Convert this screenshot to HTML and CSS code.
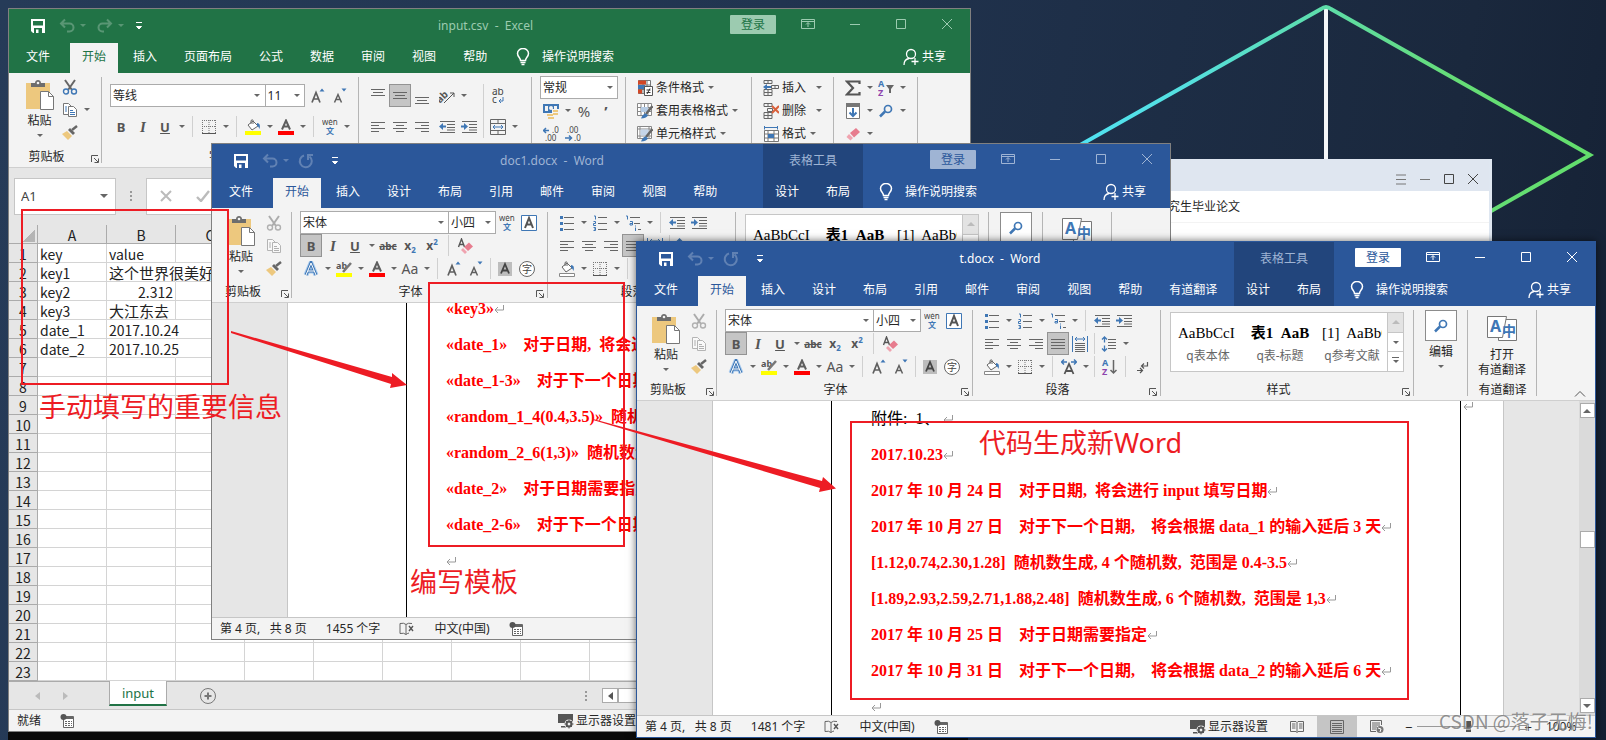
FILE: index.html
```html
<!DOCTYPE html>
<html lang="zh-CN">
<head>
    <meta charset="UTF-8">
    <meta name="viewport" content="width=device-width, initial-scale=1.0">
    <title>t.docx - Word</title>
    <link rel="stylesheet" href="styles.css">
</head>
<body>
    <!-- icon sprite -->
    <svg class="sprite" aria-hidden="true">
        <symbol id="save" viewBox="0 0 16 16"><path d="M1 1h14v14H3l-2-2z" fill="currentColor"/><path d="M3 3h10v4.500H3zM4 10h8v5H4z" fill="var(--bar)"/><path d="M6 11.500h2.500V15H6z" fill="currentColor"/></symbol>
        <symbol id="undo" viewBox="0 0 16 16"><path d="M2 5.500h8.500a4 4 0 0 1 0 8H8M6 1.500l-4 4 4 4" fill="none" stroke="currentColor" stroke-width="2"/></symbol>
        <symbol id="redo" viewBox="0 0 16 16"><path d="M14 5.500H5.500a4 4 0 0 0 0 8H7M10 1.500l4 4-4 4" fill="none" stroke="currentColor" stroke-width="2"/></symbol>
        <symbol id="repeat" viewBox="0 0 16 16"><path d="M6 2.500a6 6 0 1 0 5.500 1" fill="none" stroke="currentColor" stroke-width="2"/><path d="M10 7V2h5" fill="none" stroke="currentColor" stroke-width="2"/></symbol>
        <symbol id="custom" viewBox="0 0 8 10"><path d="M1 1.500h6M1.500 5.500h5L4 8z" stroke="currentColor" fill="currentColor"/></symbol>
        <symbol id="ropt" viewBox="0 0 14 12"><path d="M.5 1.500h13v9H.5zM.5 3.500h13M7 9V5M5 6.500l2-2 2 2" fill="none" stroke="currentColor"/></symbol>
        <symbol id="min" viewBox="0 0 12 12"><path d="M1 6.500h10" stroke="currentColor"/></symbol>
        <symbol id="max" viewBox="0 0 12 12"><path d="M1.500 1.500h9v9h-9z" fill="none" stroke="currentColor"/></symbol>
        <symbol id="close" viewBox="0 0 12 12"><path d="M1 1l10 10M11 1L1 11" stroke="currentColor"/></symbol>
        <symbol id="menu" viewBox="0 0 12 12"><path d="M1 2h10M1 6.500h10M1 11h10" stroke="currentColor"/></symbol>
        <symbol id="bulb" viewBox="0 0 14 18"><path d="M4.500 12.500c0-3-3-3.500-3-7a5.500 5 0 0 1 11 0c0 3.500-3 4-3 7zM4.500 14.500h5M5.500 16.500h3" fill="none" stroke="currentColor" stroke-width="1.500"/></symbol>
        <symbol id="person" viewBox="0 0 16 18"><circle cx="8" cy="6" r="4.500" fill="none" stroke="currentColor" stroke-width="1.300"/><path d="M1 17c0-4 2-6 5-6.500M12 10v7M8.500 13.500h7" fill="none" stroke="currentColor" stroke-width="1.300"/></symbol>
        <symbol id="paste" viewBox="0 0 28 30"><path d="M0 3h24v26H0z" fill="#edc87e"/><path d="M5 7V3h4c0-4 6-4 6 0h4v4z" fill="#6d6d6d"/><circle cx="12" cy="3" r="1.300" fill="#f3f3f3"/><path d="M14.500 11.500h8l5 5v13h-13z" fill="#fff" stroke="#777"/><path d="M22.500 11.500v5h5" fill="none" stroke="#777"/></symbol>
        <symbol id="cut" viewBox="0 0 16 16"><path d="M3 1l7 10M13 1L6 11" stroke="#666" stroke-width="2" fill="none"/><circle cx="4" cy="12.500" r="2.500" fill="none" stroke="#3f77b5" stroke-width="1.400"/><circle cx="12" cy="12.500" r="2.500" fill="none" stroke="#3f77b5" stroke-width="1.400"/></symbol>
        <symbol id="copy" viewBox="0 0 16 16"><path d="M1.500 1.500h5l3 3v8h-8z" fill="#fff" stroke="#777"/><path d="M6.500 4.500h5l3 3v7h-8z" fill="#fff" stroke="#777"/><path d="M3 5h2M3 7h2M3 9h2M8 8.500h3M8 10.500h5M8 12.500h5" stroke="#3f77b5"/></symbol>
        <symbol id="brush" viewBox="0 0 16 16"><path d="M0 9l5-3 5 5-4 4z" fill="#edc87e"/><path d="M6 5l2-2 5 5-2 2z" fill="#666"/><path d="M10 5l5-4" stroke="#666" stroke-width="2.500"/></symbol>
        <symbol id="fontup" viewBox="0 0 16 16"><path d="M2 14.500l4-10 4 10M3.500 11h5" fill="none" stroke="#5f5f5f" stroke-width="1.700"/><path d="M9.500 3.500h5L12 .5z" fill="#3f77b5"/></symbol>
        <symbol id="fontdown" viewBox="0 0 16 16"><path d="M2.500 14.500l3.500-8 3.500 8M4 11.500h4" fill="none" stroke="#5f5f5f" stroke-width="1.500"/><path d="M9.500.5h5L12 3.500z" fill="#3f77b5"/></symbol>
        <symbol id="borders" viewBox="0 0 16 16"><path d="M1.500 1v13M8 1v13M14.500 1v13M1 1.500h14M1 7.500h14" stroke="#777" stroke-dasharray="1 1"/><path d="M1 14.500h14" stroke="#555"/></symbol>
        <symbol id="fill" viewBox="0 0 16 16"><path d="M3 6l5-4 5 5-6 4z" fill="#fff" stroke="#666"/><path d="M6 5V1.500q2-1.500 2 0V5" fill="none" stroke="#666"/><path d="M12 4q4 0 2.500 6-1-3-2.500-3z" fill="#3f77b5"/><path d="M0 12h16v4H0z" fill="#ff0"/></symbol>
        <symbol id="shading" viewBox="0 0 16 16"><path d="M3 6l5-4 5 5-6 4z" fill="#fff" stroke="#666"/><path d="M6 5V1.500q2-1.500 2 0V5" fill="none" stroke="#666"/><path d="M12 4q4 0 2.500 6-1-3-2.500-3z" fill="#3f77b5"/><path d="M.5 12.500h15v3H.5z" fill="#fff" stroke="#888"/></symbol>
        <symbol id="fontcolor" viewBox="0 0 16 16"><path d="M4 10.500l4-9 4 9M5.500 7.500h5" fill="none" stroke="#5f5f5f" stroke-width="2"/><path d="M0 12h16v4H0z" fill="#f00"/></symbol>
        <symbol id="wen" viewBox="0 0 16 16"><text x="0" y="6" font-size="8" fill="#444">wén</text><text x="4" y="15" font-size="8" font-weight="bold" fill="#3f77b5">文</text></symbol>
        <symbol id="atop" viewBox="0 0 16 16"><path d="M1 1.500h14M3 4.500h10M1 7.500h14" stroke="#666"/></symbol>
        <symbol id="amid" viewBox="0 0 16 16"><path d="M1 4.500h14M3 7.500h10M1 10.500h14" stroke="#666"/></symbol>
        <symbol id="abot" viewBox="0 0 16 16"><path d="M1 9.500h14M3 12.500h10M1 15.500h14" stroke="#666"/></symbol>
        <symbol id="left" viewBox="0 0 16 16"><path d="M1 3.500h14M1 6.500h8M1 9.500h14M1 12.500h8" stroke="#666"/></symbol>
        <symbol id="center" viewBox="0 0 16 16"><path d="M1 3.500h14M4 6.500h8M1 9.500h14M4 12.500h8" stroke="#666"/></symbol>
        <symbol id="right" viewBox="0 0 16 16"><path d="M1 3.500h14M7 6.500h8M1 9.500h14M7 12.500h8" stroke="#666"/></symbol>
        <symbol id="justify" viewBox="0 0 16 16"><path d="M1 3.500h14M1 6.500h14M1 9.500h14M1 12.500h14" stroke="#666"/></symbol>
        <symbol id="distribute" viewBox="0 0 16 16"><path d="M.5 0v16M15.500 0v16M3 3h10M5 1L3 3l2 2M11 1l2 2-2 2" fill="none" stroke="#3f77b5"/><path d="M3 7.500h10M3 9.500h10M3 11.500h10M3 13.500h10M3 15.500h10" stroke="#666"/></symbol>
        <symbol id="orient" viewBox="0 0 16 16"><text x="-3" y="10" font-size="10" fill="#555" font-weight="bold" transform="rotate(-45 6 8)">ab</text><path d="M5 15L15 5M11 5h4v4" stroke="#555" fill="none"/></symbol>
        <symbol id="outdent" viewBox="0 0 16 16"><path d="M1 2.500h15M8 5.500h8M8 8.500h8M1 13.500h15M8 11h8" stroke="#666"/><path d="M0 7.500l4-3.500v2.500h3v2H4V11z" fill="#3f77b5"/></symbol>
        <symbol id="indent" viewBox="0 0 16 16"><path d="M1 2.500h15M8 5.500h8M8 8.500h8M1 13.500h15M8 11h8" stroke="#666"/><path d="M7 7.500L3 4v2.500H0v2h3V11z" fill="#3f77b5"/></symbol>
        <symbol id="wrap" viewBox="0 0 16 16"><text x="2" y="7" font-size="10" fill="#444">ab</text><text x="2" y="15" font-size="10" fill="#444">c</text><path d="M13 9v4H9M11 11l-2 2 2 2" fill="none" stroke="#3f77b5"/></symbol>
        <symbol id="merge" viewBox="0 0 16 16"><path d="M.5.5h15v15H.5zM.5 4.500h15M.5 11.500h15M8 .5v4M8 11.500v4" fill="none" stroke="#666"/><path d="M3 8h10M5 6L3 8l2 2M11 6l2 2-2 2" fill="none" stroke="#3f77b5"/></symbol>
        <symbol id="money" viewBox="0 0 16 16"><path d="M0 1h16v9H0z" fill="#3f77b5"/><path d="M2 3h3v5H2zM11 3h3v5h-3z" fill="#f3f3f3"/><circle cx="8" cy="5" r="2" fill="#f3f3f3"/><path d="M9 6h7v9H9zM3 10h7v6H3z" fill="#f3f3f3"/><path d="M10 7h5v2h-5zM10 10h5v2h-5zM4 11h6v2H4zM5 14h6v2H5z" fill="#edc87e"/></symbol>
        <symbol id="dec1" viewBox="0 0 16 16"><text x="9" y="7" font-size="8" fill="#444">.0</text><text x="2" y="15" font-size="8" fill="#444">.00</text><path d="M0 4.500h6M3 2L.5 4.500 3 7" fill="none" stroke="#3f77b5" stroke-width="1.500"/></symbol>
        <symbol id="dec2" viewBox="0 0 16 16"><text x="2" y="7" font-size="8" fill="#444">.00</text><text x="9" y="15" font-size="8" fill="#444">.0</text><path d="M0 12h6M4 9.500L6.500 12 4 14.500" fill="none" stroke="#3f77b5" stroke-width="1.500"/></symbol>
        <symbol id="cond" viewBox="0 0 16 16"><path d="M1.500.5h12v13h-12zM1.500 5h12M1.500 9.500h12M6 .5v13M10 .5v13" fill="#fff" stroke="#777"/><path d="M1 .5h8v4H1zM1 9.500h4v4H1z" fill="#d24726"/><path d="M1 5h7v4H1z" fill="#3f77b5"/><path d="M7.500 6.500h8v9h-8z" fill="#fff" stroke="#555"/><path d="M9.500 10h4M9.500 12.500h4M13 8.500l-3 5.500" stroke="#333"/></symbol>
        <symbol id="tabfmt" viewBox="0 0 16 16"><path d="M.5.5h14v12H.5zM.5 4.500h14M.5 8.500h14M4 .5v12M7.500.5v12M11 .5v12" fill="#fff" stroke="#888"/><path d="M4 4h7v5H4z" fill="#b5cbe4"/><path d="M15.500 3L9 11" stroke="#666" stroke-width="2.500"/><path d="M4 15.500q2-5 5-5l2 2q-2 3-7 3z" fill="#3f77b5"/></symbol>
        <symbol id="cellstyle" viewBox="0 0 16 16"><path d="M.5.5h14v12H.5zM.5 3h14M.5 10h14M3 .5v12M12 .5v12" fill="#fff" stroke="#888"/><path d="M3.500 3.500h8v6h-8z" fill="#c5d5e8"/><path d="M15.500 3L9 11" stroke="#666" stroke-width="2.500"/><path d="M4 15.500q2-5 5-5l2 2q-2 3-7 3z" fill="#3f77b5"/></symbol>
        <symbol id="insert" viewBox="0 0 16 16"><path d="M1 .5h8v3H1zM5 .5v3M1 12.500h8v3H1zM1 9.500h8v3M1 12.500v-3M5 9.500v6M8.500 5.500h7v3h-7zM12 5.500v3" fill="none" stroke="#666"/><path d="M0 7l4-3v2h4v2H4v2z" fill="#3f77b5"/></symbol>
        <symbol id="delete" viewBox="0 0 16 16"><path d="M1 .5h8v3H1zM5 .5v3M1 12.500h8v3H1zM1 9.500h8v3M1 12.500v-3M5 9.500v6M4.500 5.500h5v3h-5z" fill="none" stroke="#666"/><path d="M9 3l7 7M16 3L9 10" stroke="#d9603b" stroke-width="2"/></symbol>
        <symbol id="format" viewBox="0 0 16 16"><path d="M1.500 4.500h14v11h-14zM1.500 8h14M1.500 12h14M5 4.500v11M11 4.500v11" fill="#fff" stroke="#777"/><path d="M5 8h6v4H5z" fill="#3f77b5"/><path d="M1.500 0v3.500M14.500 0v3.500M2 1.500h12" stroke="#3f77b5" fill="none"/></symbol>
        <symbol id="sigma" viewBox="0 0 16 16"><path d="M14.500 4V1.500H2l6 6.500-6 6.500h12.500V12" fill="none" stroke="#555" stroke-width="2.200"/></symbol>
        <symbol id="sortf" viewBox="0 0 16 16"><text x="0" y="7" font-size="9" font-weight="bold" fill="#3f77b5">A</text><text x="0" y="16" font-size="9" font-weight="bold" fill="#8e44ad">Z</text><path d="M8 5h8l-3 4v4h-2V9z" fill="#666"/></symbol>
        <symbol id="sort" viewBox="0 0 16 16"><text x="1" y="7" font-size="9" font-weight="bold" fill="#3f77b5">A</text><text x="1" y="16" font-size="9" font-weight="bold" fill="#8e44ad">Z</text><path d="M12.500 1v13M9.500 11l3 3 3-3" fill="none" stroke="#666" stroke-width="1.500"/></symbol>
        <symbol id="filldown" viewBox="0 0 16 16"><path d="M1.500.5h13v15h-13z" fill="#fff" stroke="#777"/><path d="M1 0h14v4H1z" fill="#777"/><path d="M8 5v8M4.500 9.500L8 13l3.500-3.500" fill="none" stroke="#3f77b5" stroke-width="2"/></symbol>
        <symbol id="find" viewBox="0 0 16 16"><circle cx="10" cy="6" r="3.500" fill="none" stroke="#3f77b5" stroke-width="1.700"/><path d="M7 8.500l-5 5" stroke="#3f77b5" stroke-width="2.500"/></symbol>
        <symbol id="eraser" viewBox="0 0 16 16"><path d="M5 7l6-5 4 4-6 5.500z" fill="#e77c8e"/><path d="M4 8l4 4-2.500 2.500-4-3.500z" fill="#f0a3af"/></symbol>
        <symbol id="clearfmt" viewBox="0 0 16 16"><path d="M1.500 9l3-8 3 8M2.500 6.500h4" fill="none" stroke="#555" stroke-width="1.400"/><path d="M7 9l5-4.500 4 4L11 13z" fill="#e77c8e"/><path d="M6 10l4 4-2 2-4-4z" fill="#f0a3af"/></symbol>
        <symbol id="highlight" viewBox="0 0 16 16"><text x="0" y="8" font-size="9" font-weight="bold" fill="#555">ab</text><path d="M15 2L7 11" stroke="#777" stroke-width="2.500"/><path d="M0 12h16v4H0z" fill="#ff0"/></symbol>
        <symbol id="effect" viewBox="0 0 16 16"><path d="M3 14L8 2l5 12M5 10h6" fill="none" stroke="#a9cbee" stroke-width="5"/><path d="M3 14L8 2l5 12M5 10h6" fill="none" stroke="#3f77b5" stroke-width="3"/><path d="M3 14L8 2l5 12M5 10h6" fill="none" stroke="#fff" stroke-width="1"/></symbol>
        <symbol id="boxa" viewBox="0 0 16 16"><path d="M.5.5h15v15H.5z" fill="#fff" stroke="#3f77b5"/><path d="M4 13l4-10 4 10M5.500 9.500h5" fill="none" stroke="#555" stroke-width="2"/></symbol>
        <symbol id="shadea" viewBox="0 0 16 16"><path d="M1 1h14v14H1z" fill="#bdbdbd"/><path d="M4 12.500L8 3l4 9.500M5.500 9.500h5" fill="none" stroke="#444" stroke-width="1.800"/></symbol>
        <symbol id="circlez" viewBox="0 0 16 16"><circle cx="8" cy="8" r="7.500" fill="#fff" stroke="#666"/><text x="3" y="12" font-size="10" fill="#444">字</text></symbol>
        <symbol id="bullets" viewBox="0 0 16 16"><path d="M5 2.500h10M5 8.500h10M5 14.500h10" stroke="#666"/><path d="M1 1h3v3H1zM1 7h3v3H1zM1 13h3v3H1z" fill="#3f77b5"/></symbol>
        <symbol id="numbers" viewBox="0 0 16 16"><path d="M6 2.500h9M6 8.500h9M6 14.500h9" stroke="#666"/><path d="M2 1h1.500v3.500M1.500 6.500h2v2h-2v2h2.500M1.500 12.500h2v3h-2M2 14h1.500" fill="none" stroke="#3f77b5"/></symbol>
        <symbol id="multi" viewBox="0 0 16 16"><path d="M5 2.500h10M9 8.500h6M13 14.500h3" stroke="#666"/><path d="M1 1h1.500v3.500M5 6.500h2.500v3.500H5V8.500h2M10.500 10.500v1M10.500 12.500v3.500" fill="none" stroke="#3f77b5"/></symbol>
        <symbol id="spacing" viewBox="0 0 16 16"><path d="M7 3.500h8M7 6.500h8M7 9.500h8M7 12.500h8" stroke="#666"/><path d="M3.500 1v5.500M1 3.500L3.500 1 6 3.500M3.500 15V9.500M1 12.500L3.500 15 6 12.500" fill="none" stroke="#3f77b5" stroke-width="1.300"/></symbol>
        <symbol id="charscale" viewBox="0 0 16 16"><path d="M3.500 15L8 5l4.500 10M5 12h6" fill="none" stroke="#555" stroke-width="1.800"/><path d="M6 3H1M3 .5L.5 3 3 5.500M10 3h5M13 .5L15.500 3 13 5.500" fill="none" stroke="#3f77b5" stroke-width="1.400"/></symbol>
        <symbol id="marks" viewBox="0 0 16 16"><path d="M13.500 3v4H8M10 4.500L7.500 7 10 9.500M3 11.500h5M6 9l2.500 2.500L6 14" fill="none" stroke="#555" stroke-width="1.200"/></symbol>
        <symbol id="youdao" viewBox="0 0 30 26"><path d="M11.500 3.500h18v21h-18z" fill="#fff" stroke="#777"/><path d="M.5.5h19l-4 21H.5z" fill="#fff" stroke="#777"/><text x="3" y="16" font-size="16" font-weight="bold" fill="#3f77b5">A</text><text x="15" y="20" font-size="14" font-weight="bold" fill="#3f77b5">中</text></symbol>
        <symbol id="launch" viewBox="0 0 8 8"><path d="M.5 7V.5H7M3 3l4 4M7.500 3.500v4h-4" fill="none" stroke="#555"/></symbol>
        <symbol id="proof" viewBox="0 0 16 14"><path d="M1 1.500q4-1 6 1v10q-2-2-6-1zM7 2.500q2-2 6-1M7 12.500q1-1 3-1.500" fill="none" stroke="#666"/><path d="M10 4l4 5M14 4l-4 5" stroke="#555" stroke-width="1.400"/></symbol>
        <symbol id="macro" viewBox="0 0 14 14"><path d="M3.500 2.500h10v11h-10z" fill="#fff" stroke="#666"/><path d="M4 2h9v3H4z" fill="#666"/><circle cx="3.500" cy="3" r="3" fill="#555"/><path d="M5 7.500h7M5 9.500h7M5 11.500h7" stroke="#666" stroke-dasharray="2 1"/></symbol>
        <symbol id="display" viewBox="0 0 16 16"><path d="M0 1h15v9H0zM3 13h6v1.500H3z" fill="#555"/><circle cx="11" cy="11" r="4.500" fill="#f3f3f3"/><circle cx="11" cy="11" r="2.500" fill="none" stroke="#555" stroke-width="2"/><path d="M11 6.500v9M6.500 11h9M8 8l6 6M14 8l-6 6" stroke="#555"/><circle cx="11" cy="11" r="1.200" fill="#f3f3f3"/></symbol>
        <symbol id="read" viewBox="0 0 14 14"><path d="M.5 1.500H6l1 1 1-1h5.500v10H8l-1 1-1-1H.5zM7 2.500v10M2 4h3.500M2 6h3.500M2 8h3.500M9 4h3.500M9 6h3.500M9 8h3.500" fill="none" stroke="#666"/></symbol>
        <symbol id="print" viewBox="0 0 14 14"><path d="M.5.5h13v13H.5zM2 3.500h10M2 5.500h10M2 7.500h10M2 9.500h10M2 11.500h10" fill="none" stroke="#666"/></symbol>
        <symbol id="web" viewBox="0 0 14 14"><path d="M6 11.500H.5V.5h11V5M2 3h8M2 5h8M2 7h5M2 9h4" fill="none" stroke="#666"/><circle cx="10" cy="9.500" r="3.500" fill="#777"/><path d="M8 8l3 1-1 3" stroke="#fff" fill="none"/></symbol>
        <symbol id="enter" viewBox="0 0 10 10"><path d="M9.500 1v5H1M4 3L1 6l3 3" fill="none" stroke="#999"/></symbol>
        <symbol id="chev" viewBox="0 0 12 8"><path d="M1 6.500l5-5 5 5" fill="none" stroke="#555"/></symbol>
        <symbol id="plus" viewBox="0 0 16 16"><circle cx="8" cy="8" r="7.500" fill="none" stroke="#777"/><path d="M8 4.500v7M4.500 8h7" stroke="#777" stroke-width="2"/></symbol>
        <symbol id="cross" viewBox="0 0 12 12"><path d="M1 1l10 10M11 1L1 11" stroke="#bbb" stroke-width="2"/></symbol>
        <symbol id="check" viewBox="0 0 14 12"><path d="M1 7l4 4L13 1" fill="none" stroke="#bbb" stroke-width="2.400"/></symbol>
    </svg>

    <main class="desktop">
        <svg class="wallpaper" width="540" height="230" viewBox="0 0 540 230" aria-hidden="true">
            <defs>
                <linearGradient id="neon" x1="0" y1="0" x2="1" y2="0">
                    <stop offset="0" stop-color="#4fe3f7"/>
                    <stop offset=".25" stop-color="#55e0e0"/>
                    <stop offset=".55" stop-color="#5fdcA0"/>
                    <stop offset=".75" stop-color="#66dd77"/>
                    <stop offset="1" stop-color="#62de6c"/>
                </linearGradient>
            </defs>
            <path d="M256 8v170" stroke="#f4f6f8" stroke-width="4"/>
            <path d="M-20 162L251 9q5-4 10 0l259 146-120 68" fill="none" stroke="url(#neon)" stroke-width="4"/>
        </svg>

        <div class="taskbar"></div>

        <!-- reader window -->
        <section class="window reader">
            <div class="reader-bar">
                <button aria-label="菜单"><svg width="12" height="12"><use href="#menu"/></svg></button>
                <button aria-label="最小化"><svg width="12" height="12"><use href="#min"/></svg></button>
                <button class="dark" aria-label="最大化"><svg width="12" height="12"><use href="#max"/></svg></button>
                <button class="dark" aria-label="关闭"><svg width="12" height="12"><use href="#close"/></svg></button>
            </div>
            <div class="reader-line">研究生毕业论文</div>
        </section>

        <!-- Excel -->
        <section class="window excel">
            <header class="head inactive">
                <div class="head-left">
                    <div class="titlebar">
                        <div class="qat">
                            <button aria-label="保存"><svg width="16" height="16"><use href="#save"/></svg></button>
                            <button class="off" aria-label="撤消"><svg width="16" height="16"><use href="#undo"/></svg><i class="caret"></i></button>
                            <button class="off" aria-label="恢复"><svg width="16" height="16"><use href="#redo"/></svg><i class="caret"></i></button>
                            <button aria-label="自定义"><svg width="8" height="10"><use href="#custom"/></svg></button>
                        </div>
                        <div class="title">input.csv &nbsp;-&nbsp; Excel</div>
                    </div>
                    <nav class="tabs">
                        <button class="file">文件</button>
                        <button class="active">开始</button>
                        <button>插入</button>
                        <button>页面布局</button>
                        <button>公式</button>
                        <button>数据</button>
                        <button>审阅</button>
                        <button>视图</button>
                        <button>帮助</button>
                    </nav>
                </div>
                <div class="head-right">
                    <div class="controls">
                        <button class="login">登录</button>
                        <button aria-label="功能区"><svg width="14" height="12"><use href="#ropt"/></svg></button>
                        <button aria-label="最小化"><svg width="12" height="12"><use href="#min"/></svg></button>
                        <button aria-label="最大化"><svg width="12" height="12"><use href="#max"/></svg></button>
                        <button aria-label="关闭"><svg width="12" height="12"><use href="#close"/></svg></button>
                    </div>
                    <div class="tell">
                        <svg width="14" height="18"><use href="#bulb"/></svg>
                        <input type="text" placeholder="操作说明搜索" aria-label="操作说明搜索">
                        <button class="share"><svg width="16" height="18"><use href="#person"/></svg>共享</button>
                    </div>
                </div>
            </header>

            <div class="ribbon">
                <div class="group clip">
                    <div class="body">
                        <button class="big"><svg width="28" height="30"><use href="#paste"/></svg><span>粘贴</span><i class="caret"></i></button>
                        <div class="rows">
                            <div class="row"><button class="ic" aria-label="剪切"><svg width="16" height="16"><use href="#cut"/></svg></button></div>
                            <div class="row"><button class="ic" aria-label="复制"><svg width="16" height="16"><use href="#copy"/></svg></button><i class="caret"></i></div>
                            <div class="row"><button class="ic" aria-label="格式刷"><svg width="16" height="16"><use href="#brush"/></svg></button></div>
                        </div>
                    </div>
                    <div class="label"><span>剪贴板</span><svg width="8" height="8"><use href="#launch"/></svg></div>
                </div>
                <div class="group font">
                    <div class="body two">
                        <div class="row">
                            <span class="combo name"><select aria-label="字体"><option>等线</option></select><i class="caret"></i></span>
                            <span class="combo size"><select aria-label="字号"><option>11</option></select><i class="caret"></i></span>
                            <button class="ic" aria-label="增大字号"><svg width="16" height="16"><use href="#fontup"/></svg></button>
                            <button class="ic" aria-label="减小字号"><svg width="16" height="16"><use href="#fontdown"/></svg></button>
                        </div>
                        <div class="row">
                            <button class="ic b">B</button><button class="ic i">I</button><button class="ic u">U</button><i class="caret"></i>
                            <i class="sep wide"></i>
                            <button class="ic" aria-label="边框"><svg width="16" height="16"><use href="#borders"/></svg></button><i class="caret"></i>
                            <i class="sep wide"></i>
                            <button class="ic" aria-label="填充颜色"><svg width="16" height="16"><use href="#fill"/></svg></button><i class="caret"></i>
                            <button class="ic" aria-label="字体颜色"><svg width="16" height="16"><use href="#fontcolor"/></svg></button><i class="caret"></i>
                            <i class="sep wide"></i>
                            <button class="ic" aria-label="拼音"><svg width="16" height="16"><use href="#wen"/></svg></button><i class="caret"></i>
                        </div>
                    </div>
                    <div class="label"><span>字体</span><svg width="8" height="8"><use href="#launch"/></svg></div>
                </div>
                <div class="group align">
                    <div class="body side">
                        <div class="rows two">
                            <div class="row">
                                <button class="ic" aria-label="顶端对齐"><svg width="16" height="16"><use href="#atop"/></svg></button>
                                <button class="ic on" aria-label="垂直居中"><svg width="16" height="16"><use href="#amid"/></svg></button>
                                <button class="ic" aria-label="底端对齐"><svg width="16" height="16"><use href="#abot"/></svg></button>
                                <button class="ic gapped" aria-label="方向"><svg width="16" height="16"><use href="#orient"/></svg></button><i class="caret"></i>
                            </div>
                            <div class="row">
                                <button class="ic" aria-label="左对齐"><svg width="16" height="16"><use href="#left"/></svg></button>
                                <button class="ic" aria-label="居中"><svg width="16" height="16"><use href="#center"/></svg></button>
                                <button class="ic" aria-label="右对齐"><svg width="16" height="16"><use href="#right"/></svg></button>
                                <button class="ic gapped" aria-label="减少缩进"><svg width="16" height="16"><use href="#outdent"/></svg></button>
                                <button class="ic" aria-label="增加缩进"><svg width="16" height="16"><use href="#indent"/></svg></button>
                            </div>
                        </div>
                        <i class="sep tall"></i>
                        <div class="rows two">
                            <div class="row"><button class="ic" aria-label="自动换行"><svg width="16" height="16"><use href="#wrap"/></svg></button></div>
                            <div class="row"><button class="ic" aria-label="合并后居中"><svg width="16" height="16"><use href="#merge"/></svg></button><i class="caret"></i></div>
                        </div>
                    </div>
                </div>
                <div class="group number">
                    <div class="body three">
                        <div class="row"><span class="combo fmt"><select aria-label="数字格式"><option>常规</option></select><i class="caret"></i></span></div>
                        <div class="row"><button class="ic" aria-label="会计格式"><svg width="16" height="16"><use href="#money"/></svg></button><i class="caret"></i><button class="ic pct">%</button><button class="ic pct comma">’</button></div>
                        <div class="row"><button class="ic" aria-label="增加小数"><svg width="16" height="16"><use href="#dec1"/></svg></button><button class="ic" aria-label="减少小数"><svg width="16" height="16"><use href="#dec2"/></svg></button></div>
                    </div>
                </div>
                <div class="group styles">
                    <div class="body three">
                        <div class="row"><button class="cmd"><svg width="16" height="16"><use href="#cond"/></svg>条件格式<i class="caret"></i></button></div>
                        <div class="row"><button class="cmd"><svg width="16" height="16"><use href="#tabfmt"/></svg>套用表格格式<i class="caret"></i></button></div>
                        <div class="row"><button class="cmd"><svg width="16" height="16"><use href="#cellstyle"/></svg>单元格样式<i class="caret"></i></button></div>
                    </div>
                </div>
                <div class="group cells">
                    <div class="body three">
                        <div class="row"><button class="cmd split"><svg width="16" height="16"><use href="#insert"/></svg>插入<i class="caret"></i></button></div>
                        <div class="row"><button class="cmd split"><svg width="16" height="16"><use href="#delete"/></svg>删除<i class="caret"></i></button></div>
                        <div class="row"><button class="cmd"><svg width="16" height="16"><use href="#format"/></svg>格式<i class="caret"></i></button></div>
                    </div>
                </div>
                <div class="group edit">
                    <div class="body three">
                        <div class="row"><button class="ic" aria-label="求和"><svg width="16" height="16"><use href="#sigma"/></svg></button><i class="caret"></i><button class="ic" aria-label="排序"><svg width="16" height="16"><use href="#sortf"/></svg></button><i class="caret"></i></div>
                        <div class="row"><button class="ic" aria-label="填充"><svg width="16" height="16"><use href="#filldown"/></svg></button><i class="caret"></i><button class="ic" aria-label="查找"><svg width="16" height="16"><use href="#find"/></svg></button><i class="caret"></i></div>
                        <div class="row"><button class="ic" aria-label="清除"><svg width="16" height="16"><use href="#eraser"/></svg></button><i class="caret"></i></div>
                    </div>
                </div>
            </div>

            <div class="formula">
                <div class="namebox"><input type="text" value="A1" aria-label="名称框"><i class="caret"></i></div>
                <span class="dots"></span>
                <div class="fx"><svg width="12" height="12"><use href="#cross"/></svg><svg width="14" height="12"><use href="#check"/></svg></div>
            </div>

            <table class="sheet">
                <thead>
                    <tr><th class="corner"></th><th>A</th><th>B</th><th>C</th><th></th><th></th><th></th><th></th><th></th><th></th><th></th><th></th><th></th><th></th><th></th></tr>
                </thead>
                <tbody>
                    <tr><th>1</th><td>key</td><td>value</td><td class="rest" colspan="12"></td></tr>
                    <tr><th>2</th><td>key1</td><td class="cn spill">这个世界很美好</td><td class="rest" colspan="12"></td></tr>
                    <tr><th>3</th><td>key2</td><td class="num">2.312</td><td class="rest" colspan="12"></td></tr>
                    <tr><th>4</th><td>key3</td><td class="cn">大江东去</td><td class="rest" colspan="12"></td></tr>
                    <tr><th>5</th><td>date_1</td><td class="spill">2017.10.24</td><td class="rest" colspan="12"></td></tr>
                    <tr><th>6</th><td>date_2</td><td class="spill">2017.10.25</td><td class="rest" colspan="12"></td></tr>
                    <tr><th>7</th><td></td><td></td><td class="rest" colspan="12"></td></tr>
                    <tr><th>8</th><td></td><td></td><td class="rest" colspan="12"></td></tr>
                    <tr><th>9</th><td></td><td></td><td class="rest" colspan="12"></td></tr>
                    <tr><th>10</th><td></td><td></td><td class="rest" colspan="12"></td></tr>
                    <tr><th>11</th><td></td><td></td><td class="rest" colspan="12"></td></tr>
                    <tr><th>12</th><td></td><td></td><td class="rest" colspan="12"></td></tr>
                    <tr><th>13</th><td></td><td></td><td class="rest" colspan="12"></td></tr>
                    <tr><th>14</th><td></td><td></td><td class="rest" colspan="12"></td></tr>
                    <tr><th>15</th><td></td><td></td><td class="rest" colspan="12"></td></tr>
                    <tr><th>16</th><td></td><td></td><td class="rest" colspan="12"></td></tr>
                    <tr><th>17</th><td></td><td></td><td class="rest" colspan="12"></td></tr>
                    <tr><th>18</th><td></td><td></td><td class="rest" colspan="12"></td></tr>
                    <tr><th>19</th><td></td><td></td><td class="rest" colspan="12"></td></tr>
                    <tr><th>20</th><td></td><td></td><td class="rest" colspan="12"></td></tr>
                    <tr><th>21</th><td></td><td></td><td class="rest" colspan="12"></td></tr>
                    <tr><th>22</th><td></td><td></td><td class="rest" colspan="12"></td></tr>
                    <tr><th>23</th><td></td><td></td><td class="rest" colspan="12"></td></tr>
                </tbody>
            </table>

            <div class="sheetbar">
                <i class="nav prev"></i><i class="nav next"></i>
                <button class="sheet-tab">input</button>
                <button class="add" aria-label="新工作表"><svg width="16" height="16"><use href="#plus"/></svg></button>
                <span class="dots"></span>
                <div class="hscroll"><button aria-label="向左滚动"><i class="nav prev"></i></button><span class="thumb"></span></div>
            </div>
            <footer class="status">
                <span>就绪</span>
                <svg class="macro" width="14" height="14"><use href="#macro"/></svg>
                <span class="display"><svg width="16" height="16"><use href="#display"/></svg>显示器设置</span>
            </footer>
        </section>

        <!-- Word: template -->
        <section class="window word doc1">
            <header class="head inactive">
                <div class="head-left">
                    <div class="titlebar">
                        <div class="qat">
                            <button aria-label="保存"><svg width="16" height="16"><use href="#save"/></svg></button>
                            <button class="off" aria-label="撤消"><svg width="16" height="16"><use href="#undo"/></svg><i class="caret"></i></button>
                            <button class="off" aria-label="重复"><svg width="16" height="16"><use href="#repeat"/></svg></button>
                            <button aria-label="自定义"><svg width="8" height="10"><use href="#custom"/></svg></button>
                        </div>
                        <div class="title">doc1.docx &nbsp;-&nbsp; Word</div>
                    </div>
                    <nav class="tabs">
                        <button class="file">文件</button>
                        <button class="active">开始</button>
                        <button>插入</button>
                        <button>设计</button>
                        <button>布局</button>
                        <button>引用</button>
                        <button>邮件</button>
                        <button>审阅</button>
                        <button>视图</button>
                        <button>帮助</button>
                    </nav>
                </div>
                <div class="context">
                    <div class="context-title">表格工具</div>
                    <nav class="tabs"><button>设计</button><button>布局</button></nav>
                </div>
                <div class="head-right">
                    <div class="controls">
                        <button class="login">登录</button>
                        <button aria-label="功能区"><svg width="14" height="12"><use href="#ropt"/></svg></button>
                        <button aria-label="最小化"><svg width="12" height="12"><use href="#min"/></svg></button>
                        <button aria-label="最大化"><svg width="12" height="12"><use href="#max"/></svg></button>
                        <button aria-label="关闭"><svg width="12" height="12"><use href="#close"/></svg></button>
                    </div>
                    <div class="tell">
                        <svg width="14" height="18"><use href="#bulb"/></svg>
                        <input type="text" placeholder="操作说明搜索" aria-label="操作说明搜索">
                        <button class="share"><svg width="16" height="18"><use href="#person"/></svg>共享</button>
                    </div>
                </div>
            </header>

            <div class="ribbon">
                <div class="group clip">
                    <div class="body">
                        <button class="big"><svg width="28" height="30"><use href="#paste"/></svg><span>粘贴</span><i class="caret"></i></button>
                        <div class="rows">
                            <div class="row"><button class="ic dim" aria-label="剪切"><svg width="16" height="16"><use href="#cut"/></svg></button></div>
                            <div class="row"><button class="ic dim" aria-label="复制"><svg width="16" height="16"><use href="#copy"/></svg></button></div>
                            <div class="row"><button class="ic" aria-label="格式刷"><svg width="16" height="16"><use href="#brush"/></svg></button></div>
                        </div>
                    </div>
                    <div class="label"><span>剪贴板</span><svg width="8" height="8"><use href="#launch"/></svg></div>
                </div>
                <div class="group font">
                    <div class="body three">
                        <div class="row">
                            <span class="combo name"><select aria-label="字体"><option>宋体</option></select><i class="caret"></i></span>
                            <span class="combo size"><select aria-label="字号"><option>小四</option></select><i class="caret"></i></span>
                            <button class="ic" aria-label="拼音指南"><svg width="16" height="16"><use href="#wen"/></svg></button>
                            <button class="ic" aria-label="字符边框"><svg width="16" height="16"><use href="#boxa"/></svg></button>
                        </div>
                        <div class="row">
                            <button class="ic b on">B</button><button class="ic i">I</button><button class="ic u">U</button><i class="caret"></i>
                            <button class="ic s">abc</button><button class="ic x">x<sub>2</sub></button><button class="ic x">x<sup>2</sup></button>
                            <i class="sep wide"></i>
                            <button class="ic" aria-label="清除格式"><svg width="16" height="16"><use href="#clearfmt"/></svg></button>
                        </div>
                        <div class="row">
                            <button class="ic" aria-label="文本效果"><svg width="16" height="16"><use href="#effect"/></svg></button><i class="caret"></i>
                            <button class="ic" aria-label="突出显示"><svg width="16" height="16"><use href="#highlight"/></svg></button><i class="caret"></i>
                            <button class="ic" aria-label="字体颜色"><svg width="16" height="16"><use href="#fontcolor"/></svg></button><i class="caret"></i>
                            <button class="ic aa">Aa</button><i class="caret"></i>
                            <i class="sep wide"></i>
                            <button class="ic" aria-label="增大字号"><svg width="16" height="16"><use href="#fontup"/></svg></button>
                            <button class="ic" aria-label="减小字号"><svg width="16" height="16"><use href="#fontdown"/></svg></button>
                            <i class="sep"></i>
                            <button class="ic" aria-label="字符底纹"><svg width="16" height="16"><use href="#shadea"/></svg></button>
                            <button class="ic" aria-label="带圈字符"><svg width="16" height="16"><use href="#circlez"/></svg></button>
                        </div>
                    </div>
                    <div class="label"><span>字体</span><svg width="8" height="8"><use href="#launch"/></svg></div>
                </div>
                <div class="group para">
                    <div class="body three">
                        <div class="row">
                            <button class="ic" aria-label="项目符号"><svg width="16" height="16"><use href="#bullets"/></svg></button><i class="caret"></i>
                            <button class="ic" aria-label="编号"><svg width="16" height="16"><use href="#numbers"/></svg></button><i class="caret"></i>
                            <button class="ic" aria-label="多级列表"><svg width="16" height="16"><use href="#multi"/></svg></button><i class="caret"></i>
                            <i class="sep wide"></i>
                            <button class="ic" aria-label="减少缩进"><svg width="16" height="16"><use href="#outdent"/></svg></button>
                            <button class="ic" aria-label="增加缩进"><svg width="16" height="16"><use href="#indent"/></svg></button>
                        </div>
                        <div class="row">
                            <button class="ic" aria-label="左对齐"><svg width="16" height="16"><use href="#left"/></svg></button>
                            <button class="ic" aria-label="居中"><svg width="16" height="16"><use href="#center"/></svg></button>
                            <button class="ic" aria-label="右对齐"><svg width="16" height="16"><use href="#right"/></svg></button>
                            <button class="ic on" aria-label="两端对齐"><svg width="16" height="16"><use href="#justify"/></svg></button>
                            <button class="ic" aria-label="分散对齐"><svg width="16" height="16"><use href="#distribute"/></svg></button>
                            <i class="sep"></i>
                            <button class="ic" aria-label="行距"><svg width="16" height="16"><use href="#spacing"/></svg></button><i class="caret"></i>
                        </div>
                        <div class="row">
                            <button class="ic" aria-label="底纹"><svg width="16" height="16"><use href="#shading"/></svg></button><i class="caret"></i>
                            <button class="ic" aria-label="边框"><svg width="16" height="16"><use href="#borders"/></svg></button><i class="caret"></i>
                            <i class="sep wide"></i>
                            <button class="ic" aria-label="中文版式"><svg width="16" height="16"><use href="#charscale"/></svg></button><i class="caret"></i>
                            <i class="sep"></i>
                            <button class="ic" aria-label="排序"><svg width="16" height="16"><use href="#sort"/></svg></button>
                            <i class="sep wide"></i>
                            <button class="ic" aria-label="编辑标记"><svg width="16" height="16"><use href="#marks"/></svg></button>
                        </div>
                    </div>
                    <div class="label"><span>段落</span><svg width="8" height="8"><use href="#launch"/></svg></div>
                </div>
                <div class="group gallery-group">
                    <div class="body">
                        <div class="gallery">
                            <button class="style"><b class="plain">AaBbCcI</b></button>
                            <button class="style"><b>表1&nbsp; AaB</b></button>
                            <button class="style"><b class="plain">[1]&nbsp; AaBbC</b></button>
                            <div class="gallery-nav"><button class="off" aria-label="上一行"><i class="nav up"></i></button><button aria-label="下一行"><i class="caret"></i></button><button class="more" aria-label="更多"><i class="caret"></i></button></div>
                        </div>
                    </div>
                </div>
                <div class="group find">
                    <div class="body"><button class="big" aria-label="编辑"><span class="findbox"><svg width="16" height="16"><use href="#find"/></svg></span></button></div>
                </div>
                <div class="group youdao">
                    <div class="body"><button class="big" aria-label="有道翻译"><svg width="30" height="26"><use href="#youdao"/></svg></button></div>
                </div>
            </div>

            <div class="doc">
                <div class="gutter"></div>
                <div class="page">
                    <div class="cell">
                        <p>«key3»<svg width="10" height="10"><use href="#enter"/></svg></p>
                        <p>«date_1»    对于日期,  将会进行</p>
                        <p>«date_1-3»    对于下一个日期</p>
                        <p>«random_1_4(0.4,3.5)»  随机数</p>
                        <p>«random_2_6(1,3)»  随机数生成</p>
                        <p>«date_2»    对于日期需要指定</p>
                        <p>«date_2-6»    对于下一个日期</p>
                        <p><svg width="10" height="10"><use href="#enter"/></svg></p>
                    </div>
                </div>
                <div class="gutter"></div>
            </div>
            <footer class="status">
                <span>第 4 页,&nbsp;&nbsp; 共 8 页</span>
                <span>1455 个字</span>
                <svg width="16" height="14"><use href="#proof"/></svg>
                <span>中文(中国)</span>
                <svg width="14" height="14"><use href="#macro"/></svg>
            </footer>
        </section>

        <!-- Word: generated document -->
        <section class="window word result">
            <header class="head">
                <div class="head-left">
                    <div class="titlebar">
                        <div class="qat">
                            <button aria-label="保存"><svg width="16" height="16"><use href="#save"/></svg></button>
                            <button class="off" aria-label="撤消"><svg width="16" height="16"><use href="#undo"/></svg><i class="caret"></i></button>
                            <button class="off" aria-label="重复"><svg width="16" height="16"><use href="#repeat"/></svg></button>
                            <button aria-label="自定义"><svg width="8" height="10"><use href="#custom"/></svg></button>
                        </div>
                        <div class="title">t.docx &nbsp;-&nbsp; Word</div>
                    </div>
                    <nav class="tabs">
                        <button class="file">文件</button>
                        <button class="active">开始</button>
                        <button>插入</button>
                        <button>设计</button>
                        <button>布局</button>
                        <button>引用</button>
                        <button>邮件</button>
                        <button>审阅</button>
                        <button>视图</button>
                        <button>帮助</button>
                        <button>有道翻译</button>
                    </nav>
                </div>
                <div class="context">
                    <div class="context-title">表格工具</div>
                    <nav class="tabs"><button>设计</button><button>布局</button></nav>
                </div>
                <div class="head-right">
                    <div class="controls">
                        <button class="login">登录</button>
                        <button aria-label="功能区"><svg width="14" height="12"><use href="#ropt"/></svg></button>
                        <button aria-label="最小化"><svg width="12" height="12"><use href="#min"/></svg></button>
                        <button aria-label="最大化"><svg width="12" height="12"><use href="#max"/></svg></button>
                        <button aria-label="关闭"><svg width="12" height="12"><use href="#close"/></svg></button>
                    </div>
                    <div class="tell">
                        <svg width="14" height="18"><use href="#bulb"/></svg>
                        <input type="text" placeholder="操作说明搜索" aria-label="操作说明搜索">
                        <button class="share"><svg width="16" height="18"><use href="#person"/></svg>共享</button>
                    </div>
                </div>
            </header>

            <div class="ribbon">
                <div class="group clip">
                    <div class="body">
                        <button class="big"><svg width="28" height="30"><use href="#paste"/></svg><span>粘贴</span><i class="caret"></i></button>
                        <div class="rows">
                            <div class="row"><button class="ic dim" aria-label="剪切"><svg width="16" height="16"><use href="#cut"/></svg></button></div>
                            <div class="row"><button class="ic dim" aria-label="复制"><svg width="16" height="16"><use href="#copy"/></svg></button></div>
                            <div class="row"><button class="ic" aria-label="格式刷"><svg width="16" height="16"><use href="#brush"/></svg></button></div>
                        </div>
                    </div>
                    <div class="label"><span>剪贴板</span><svg width="8" height="8"><use href="#launch"/></svg></div>
                </div>
                <div class="group font">
                    <div class="body three">
                        <div class="row">
                            <span class="combo name"><select aria-label="字体"><option>宋体</option></select><i class="caret"></i></span>
                            <span class="combo size"><select aria-label="字号"><option>小四</option></select><i class="caret"></i></span>
                            <button class="ic" aria-label="拼音指南"><svg width="16" height="16"><use href="#wen"/></svg></button>
                            <button class="ic" aria-label="字符边框"><svg width="16" height="16"><use href="#boxa"/></svg></button>
                        </div>
                        <div class="row">
                            <button class="ic b on">B</button><button class="ic i">I</button><button class="ic u">U</button><i class="caret"></i>
                            <button class="ic s">abc</button><button class="ic x">x<sub>2</sub></button><button class="ic x">x<sup>2</sup></button>
                            <i class="sep wide"></i>
                            <button class="ic" aria-label="清除格式"><svg width="16" height="16"><use href="#clearfmt"/></svg></button>
                        </div>
                        <div class="row">
                            <button class="ic" aria-label="文本效果"><svg width="16" height="16"><use href="#effect"/></svg></button><i class="caret"></i>
                            <button class="ic" aria-label="突出显示"><svg width="16" height="16"><use href="#highlight"/></svg></button><i class="caret"></i>
                            <button class="ic" aria-label="字体颜色"><svg width="16" height="16"><use href="#fontcolor"/></svg></button><i class="caret"></i>
                            <button class="ic aa">Aa</button><i class="caret"></i>
                            <i class="sep wide"></i>
                            <button class="ic" aria-label="增大字号"><svg width="16" height="16"><use href="#fontup"/></svg></button>
                            <button class="ic" aria-label="减小字号"><svg width="16" height="16"><use href="#fontdown"/></svg></button>
                            <i class="sep"></i>
                            <button class="ic" aria-label="字符底纹"><svg width="16" height="16"><use href="#shadea"/></svg></button>
                            <button class="ic" aria-label="带圈字符"><svg width="16" height="16"><use href="#circlez"/></svg></button>
                        </div>
                    </div>
                    <div class="label"><span>字体</span><svg width="8" height="8"><use href="#launch"/></svg></div>
                </div>
                <div class="group para">
                    <div class="body three">
                        <div class="row">
                            <button class="ic" aria-label="项目符号"><svg width="16" height="16"><use href="#bullets"/></svg></button><i class="caret"></i>
                            <button class="ic" aria-label="编号"><svg width="16" height="16"><use href="#numbers"/></svg></button><i class="caret"></i>
                            <button class="ic" aria-label="多级列表"><svg width="16" height="16"><use href="#multi"/></svg></button><i class="caret"></i>
                            <i class="sep wide"></i>
                            <button class="ic" aria-label="减少缩进"><svg width="16" height="16"><use href="#outdent"/></svg></button>
                            <button class="ic" aria-label="增加缩进"><svg width="16" height="16"><use href="#indent"/></svg></button>
                        </div>
                        <div class="row">
                            <button class="ic" aria-label="左对齐"><svg width="16" height="16"><use href="#left"/></svg></button>
                            <button class="ic" aria-label="居中"><svg width="16" height="16"><use href="#center"/></svg></button>
                            <button class="ic" aria-label="右对齐"><svg width="16" height="16"><use href="#right"/></svg></button>
                            <button class="ic on" aria-label="两端对齐"><svg width="16" height="16"><use href="#justify"/></svg></button>
                            <button class="ic" aria-label="分散对齐"><svg width="16" height="16"><use href="#distribute"/></svg></button>
                            <i class="sep"></i>
                            <button class="ic" aria-label="行距"><svg width="16" height="16"><use href="#spacing"/></svg></button><i class="caret"></i>
                        </div>
                        <div class="row">
                            <button class="ic" aria-label="底纹"><svg width="16" height="16"><use href="#shading"/></svg></button><i class="caret"></i>
                            <button class="ic" aria-label="边框"><svg width="16" height="16"><use href="#borders"/></svg></button><i class="caret"></i>
                            <i class="sep wide"></i>
                            <button class="ic" aria-label="中文版式"><svg width="16" height="16"><use href="#charscale"/></svg></button><i class="caret"></i>
                            <i class="sep"></i>
                            <button class="ic" aria-label="排序"><svg width="16" height="16"><use href="#sort"/></svg></button>
                            <i class="sep wide"></i>
                            <button class="ic" aria-label="编辑标记"><svg width="16" height="16"><use href="#marks"/></svg></button>
                        </div>
                    </div>
                    <div class="label"><span>段落</span><svg width="8" height="8"><use href="#launch"/></svg></div>
                </div>
                <div class="group gallery-group">
                    <div class="body">
                        <div class="gallery">
                            <button class="style"><b class="plain">AaBbCcI</b><span>q表本体</span></button>
                            <button class="style"><b>表1&nbsp; AaB</b><span>q表-标题</span></button>
                            <button class="style"><b class="plain">[1]&nbsp; AaBbC</b><span>q参考文献</span></button>
                            <div class="gallery-nav"><button class="off" aria-label="上一行"><i class="nav up"></i></button><button aria-label="下一行"><i class="caret"></i></button><button class="more" aria-label="更多"><i class="caret"></i></button></div>
                        </div>
                    </div>
                    <div class="label"><span>样式</span><svg width="8" height="8"><use href="#launch"/></svg></div>
                </div>
                <div class="group find">
                    <div class="body"><button class="big"><span class="findbox"><svg width="16" height="16"><use href="#find"/></svg></span><span>编辑</span><i class="caret"></i></button></div>
                </div>
                <div class="group youdao">
                    <div class="body"><button class="big"><svg width="30" height="26"><use href="#youdao"/></svg><span>打开<br>有道翻译</span></button></div>
                    <div class="label"><span>有道翻译</span></div>
                </div>
                <button class="collapse" aria-label="折叠功能区"><svg width="12" height="8"><use href="#chev"/></svg></button>
            </div>

            <div class="doc">
                <div class="gutter"></div>
                <div class="page">
                    <div class="cell">
                        <p class="normal">附件:  1、 <svg width="10" height="10"><use href="#enter"/></svg></p>
                        <p>2017.10.23<svg width="10" height="10"><use href="#enter"/></svg></p>
                        <p>2017 年 10 月 24 日    对于日期,  将会进行 input 填写日期<svg width="10" height="10"><use href="#enter"/></svg></p>
                        <p>2017 年 10 月 27 日    对于下一个日期,    将会根据 data_1 的输入延后 3 天<svg width="10" height="10"><use href="#enter"/></svg></p>
                        <p>[1.12,0.74,2.30,1.28]  随机数生成, 4 个随机数,  范围是 0.4-3.5<svg width="10" height="10"><use href="#enter"/></svg></p>
                        <p>[1.89,2.93,2.59,2.71,1.88,2.48]  随机数生成, 6 个随机数,  范围是 1,3<svg width="10" height="10"><use href="#enter"/></svg></p>
                        <p>2017 年 10 月 25 日    对于日期需要指定<svg width="10" height="10"><use href="#enter"/></svg></p>
                        <p>2017 年 10 月 31 日    对于下一个日期,    将会根据 data_2 的输入延后 6 天<svg width="10" height="10"><use href="#enter"/></svg></p>
                        <p><svg width="10" height="10"><use href="#enter"/></svg></p>
                    </div>
                    <svg class="cell-end" width="10" height="10"><use href="#enter"/></svg>
                </div>
                <div class="gutter"></div>
                <div class="vscroll">
                    <button aria-label="向上滚动"><i class="nav up"></i></button>
                    <span class="thumb"></span>
                    <button aria-label="向下滚动"><i class="nav down"></i></button>
                </div>
            </div>
            <footer class="status">
                <span>第 4 页,&nbsp;&nbsp; 共 8 页</span>
                <span>1481 个字</span>
                <svg width="16" height="14"><use href="#proof"/></svg>
                <span>中文(中国)</span>
                <svg width="14" height="14"><use href="#macro"/></svg>
                <span class="display"><svg width="16" height="16"><use href="#display"/></svg>显示器设置</span>
                <div class="views">
                    <button aria-label="阅读视图"><svg width="14" height="14"><use href="#read"/></svg></button>
                    <button class="on" aria-label="页面视图"><svg width="14" height="14"><use href="#print"/></svg></button>
                    <button aria-label="Web 版式"><svg width="14" height="14"><use href="#web"/></svg></button>
                </div>
                <div class="zoom">
                    <span>−</span><input type="range" min="0" max="100" value="50" aria-label="缩放"><span>+</span><span class="percent">100%</span>
                </div>
            </footer>
        </section>

        <!-- red marks over the windows -->
        <svg class="marks" width="1606" height="740" aria-hidden="true">
            <g fill="none" stroke="#ed1c24" stroke-width="2">
                <rect x="22" y="210" width="206" height="174"/>
                <rect x="429" y="283" width="195" height="263"/>
                <rect x="851" y="422" width="557" height="277"/>
            </g>
            <g fill="#ed1c24">
                <path d="M231 331l161 46 0-4 15 12-17 3 1-4L231 333z"/>
                <path d="M593 419l229 62 1-4 13 11.500-17 3.500 1-4-227-68z"/>
            </g>
        </svg>
        <p class="note note-input">手动填写的重要信息</p>
        <p class="note note-template">编写模板</p>
        <p class="note note-result">代码生成新Word</p>
        <p class="watermark">CSDN @落子无悔!</p>
    </main>
</body>
</html>
```

FILE: styles.css
```css
* {
    box-sizing: border-box;
}
body {
    margin: 0;
    font-family: "Noto Sans", "Noto Sans CJK SC", sans-serif;
    font-size: 12px;
    line-height: 16px;
    color: #262626;
    background: #1a2940;
}
button, input, select {
    margin: 0;
    padding: 0;
    border: 0;
    background: none;
    color: inherit;
    font: inherit;
}
button {
    white-space: nowrap;
}
svg {
    flex: none;
    display: block;
}
p {
    margin: 0;
}
.sprite {
    display: none;
}
.desktop {
    position: relative;
    height: 100vh;
    min-height: 740px;
    overflow: hidden;
    background: linear-gradient(100deg, #263b58, #213450 45%, #1a283d 85%, #142033);
}
.wallpaper {
    position: absolute;
    left: 1070px;
    top: 0;
}
.taskbar {
    position: absolute;
    left: 8px;
    top: 732px;
    bottom: 0;
    width: 960px;
    background: #0a0a0a;
}
.window {
    position: absolute;
    display: flex;
    flex-direction: column;
    width: 960px;
    border: 1px solid #808080;
    background: #e6e6e6;
    overflow: hidden;
}

/* reader window */
.reader {
    left: 900px;
    top: 159px;
    width: 592px;
    height: 200px;
    border: 0;
    border-right: 3px solid #dfe7f1;
    background: #fff;
}
.reader-bar {
    display: flex;
    justify-content: flex-end;
    align-items: center;
    gap: 12px;
    height: 32px;
    padding: 8px 10px 0 0;
    background: #dfe6f0;
    color: #777;
}
.reader-bar .dark {
    color: #444;
}
.reader-line {
    padding: 8px 0 7px 256px;
    border-bottom: 1px solid #f3f3f3;
}

/* title bar and tabs */
.head {
    display: flex;
    height: 64px;
    flex: none;
    color: #fff;
    background: var(--bar);
}
.excel {
    --bar: #217346;
    --muted: #9ccbb0;
    left: 8px;
    top: 8px;
    width: 963px;
    height: 724px;
}
.word {
    --bar: #2b579a;
    --muted: #9fb4d4;
}
.doc1 {
    left: 211px;
    top: 143px;
    height: 497px;
}
.result {
    left: 636px;
    top: 241px;
    height: 497px;
    border-color: #2b579a;
    box-shadow: 0 0 8px rgba(0, 0, 0, 0.6);
}
.head-left {
    flex: 1;
    min-width: 0;
}
.titlebar, .controls {
    display: flex;
    align-items: center;
    height: 34px;
}
.titlebar {
    padding-bottom: 1px;
}
.qat {
    display: flex;
    align-items: center;
    flex: none;
    width: 129px;
    padding-left: 21px;
}
.qat button {
    display: flex;
    align-items: center;
    height: 16px;
    margin-right: 13px;
}
.qat button:last-child {
    margin: 0 0 0 -6px;
}
.qat .caret {
    width: 15px;
}
.qat .off + .off {
    margin-left: -6px;
}
.word .qat .off + .off {
    margin-left: -8px;
}
.word .qat button:last-child {
    margin-left: 4px;
}
.off {
    opacity: 0.25;
}
.title {
    flex: 1;
    text-align: center;
    white-space: nowrap;
}
.inactive .title, .inactive .controls {
    color: var(--muted);
}
.excel .title {
    flex: none;
    margin-left: 300px;
}
.tabs {
    display: flex;
    gap: 3px;
    height: 30px;
}
.tabs button {
    padding: 0 12px 2px;
}
.tabs .file {
    padding: 0 17px 2px;
}
.tabs .active {
    background: #f3f3f3;
    color: var(--bar);
}
.context {
    width: 100px;
    padding-top: 1px;
    background: #22457c;
}
.context-title {
    height: 33px;
    line-height: 32px;
    text-align: center;
    color: #9fb4d4;
}
.head-right {
    width: 261px;
}
.doc1 .head-right {
    width: 307px;
}
.excel .head-right {
    width: 470px;
}
.controls {
    justify-content: flex-end;
    padding: 0 17px 4px 0;
    gap: 34px;
}
.controls button {
    display: block;
}
.controls .login {
    width: 46px;
    height: 19px;
    margin: 1px -9px 0 0;
    border-radius: 1px;
    background: #fff;
    color: var(--bar);
}
.inactive .controls .login {
    background: var(--muted);
}
.tell {
    display: flex;
    align-items: center;
    height: 30px;
    padding: 0 24px 2px 16px;
}
.tell input {
    flex: 1;
    min-width: 0;
    margin-left: 12px;
}
.tell input::placeholder {
    color: #fff;
}
.share {
    display: flex;
    align-items: center;
    gap: 3px;
}

/* ribbon */
.ribbon {
    display: flex;
    flex: none;
    height: 95px;
    background: #f3f3f3;
    border-bottom: 1px solid #cfcfcf;
}
.group {
    display: flex;
    flex-direction: column;
    flex: none;
    height: 94px;
    padding: 0 8px;
    background: linear-gradient(#b5b5b5, #b5b5b5) right center / 1px 86px no-repeat;
}
.body {
    flex: 1;
    padding-top: 3px;
}
.row {
    display: flex;
    align-items: center;
    height: 23px;
}
.label {
    display: flex;
    align-items: center;
    height: 22px;
    margin: 0 -4px 0 -8px;
    padding-top: 2px;
    white-space: nowrap;
}
.label span {
    flex: 1;
    text-align: center;
}
.label svg {
    margin: 3px 0 0 7px;
}
.ic {
    display: flex;
    align-items: center;
    justify-content: center;
    flex: none;
    width: 22px;
    height: 23px;
    color: #555;
}
.on {
    border: 1px solid #939393;
    background: #c5c5c5;
}
.dim {
    filter: grayscale(1);
    opacity: 0.5;
}
.caret {
    display: flex;
    justify-content: center;
    flex: none;
    width: 11px;
}
.caret::before {
    content: "";
    border: 3px solid transparent;
    border-top-color: currentColor;
    border-bottom: 0;
}
.ribbon .caret, .namebox .caret {
    color: #666;
}
.sep {
    flex: none;
    width: 1px;
    height: 21px;
    margin: 0 3px;
    background: #d0d0d0;
}
.sep.wide {
    margin: 0 5px;
}
.b, .i, .u {
    font-size: 13px;
    font-weight: bold;
}
.i {
    font-family: "Liberation Serif", serif;
    font-size: 15px;
    font-style: italic;
}
.u {
    text-decoration: underline;
}
.s {
    font-size: 10px;
    font-weight: bold;
    text-decoration: line-through;
}
.x {
    font-weight: bold;
}
.x sub, .x sup {
    font-size: 8px;
    line-height: 8px;
    color: #3f77b5;
}
.x sub {
    align-self: flex-end;
    margin-bottom: 3px;
}
.x sup {
    align-self: flex-start;
    margin-top: 4px;
}
.aa {
    font-size: 14px;
}
.pct {
    font-size: 15px;
}
.comma {
    font-weight: bold;
}
.combo {
    display: flex;
    align-items: center;
    height: 23px;
    padding-right: 2px;
    border: 1px solid #ababab;
    background: #fff;
}
.combo select {
    flex: 1;
    min-width: 0;
    padding-left: 2px;
    appearance: none;
    outline: none;
}
.combo.name {
    width: 149px;
}
.combo.size {
    width: 48px;
    margin-left: -1px;
}
.big {
    display: flex;
    flex-direction: column;
    align-items: center;
    width: 44px;
    line-height: 15px;
}
.big .caret {
    margin-top: 6px;
}
.clip {
    padding: 0 7px;
    width: 80px;
}
.clip .body {
    display: flex;
}
.clip .label {
    margin-left: -7px;
}
.clip .big {
    padding-top: 5px;
}
.clip .big span {
    margin-top: 3px;
}

/* ribbon, Excel groups */
.excel .clip {
    width: 93px;
}
.excel .clip .body {
    padding-top: 2px;
}
.excel .clip .big {
    width: 43px;
    padding-left: 4px;
}
.excel .combo.name {
    width: 158px;
}
.excel .combo.size {
    width: 41px;
    margin-right: 2px;
}
.excel .font {
    width: 257px;
}
.two {
    display: flex;
    flex-direction: column;
    gap: 8px;
}
.body.two, .side {
    padding-top: 11px;
}
.side {
    display: flex;
}
.side .two {
    justify-content: flex-start;
}
.tall {
    height: 54px;
}
.align {
    width: 173px;
}
.gapped {
    margin-left: 3px;
}
.number {
    width: 94px;
}
.combo.fmt {
    width: 78px;
}
.styles {
    width: 126px;
}
.cells {
    width: 82px;
}
.edit {
    width: 84px;
}
.cmd {
    display: flex;
    align-items: center;
}
.cmd svg {
    margin: 0 3px;
}
.cmd .caret {
    margin-left: 1px;
}
.cmd.split .caret {
    margin-left: 7px;
}

/* ribbon, Word groups */
.gallery-group {
    width: 253px;
    padding-left: 9px;
}
.gallery-group .body {
    padding-top: 6px;
}
.gallery {
    display: flex;
    width: 234px;
    height: 60px;
    border: 1px solid #c6c6c6;
    background: #fff;
}
.style {
    display: flex;
    flex-direction: column;
    width: 72px;
    padding: 11px 5px 0 7px;
    text-align: center;
    color: #666;
    line-height: 18px;
    overflow: hidden;
}
.style b {
    margin-bottom: 5px;
    overflow: hidden;
    font-family: "Liberation Serif", "Noto Sans CJK SC", serif;
    font-size: 15px;
    color: #000;
}
.style .plain {
    font-weight: normal;
    text-align: left;
}
.gallery-nav {
    display: flex;
    flex-direction: column;
    flex: 1;
    border-left: 1px solid #c6c6c6;
}
.gallery-nav button {
    display: flex;
    flex: 1;
    align-items: center;
    justify-content: center;
    border-top: 1px solid #c6c6c6;
}
.gallery-nav .off {
    border: 0;
    opacity: 1;
    background: #e3e3e3;
    color: #bbb;
}
.gallery-nav .more {
    background: linear-gradient(#666, #666) center 5px / 7px 1px no-repeat;
}
.find {
    width: 54px;
    padding: 0 5px;
}
.find .body {
    padding-top: 4px;
}
.findbox {
    display: flex;
    align-items: center;
    justify-content: center;
    width: 32px;
    height: 31px;
    margin-bottom: 3px;
    border: 1px solid #8c8c8c;
    background: #fff;
}
.youdao {
    width: 69px;
}
.youdao .body {
    padding-top: 10px;
}
.youdao .label {
    margin-right: -8px;
}
.youdao .big {
    width: 52px;
    gap: 5px;
}
.collapse {
    margin: auto 9px 2px auto;
}

/* small solid arrows */
.nav {
    width: 0;
    height: 0;
    border: 4px solid transparent;
}
.nav.prev {
    border-right: 5px solid currentColor;
    border-left: 0;
}
.nav.next {
    border-left: 5px solid currentColor;
    border-right: 0;
}
.nav.up {
    border-bottom: 4px solid currentColor;
    border-top: 0;
}
.nav.down {
    border-top: 4px solid currentColor;
    border-bottom: 0;
}

/* Excel body */
.formula {
    display: flex;
    align-items: center;
    flex: none;
    height: 57px;
    padding: 0 0 1px 5px;
}
.namebox {
    display: flex;
    align-items: center;
    width: 102px;
    height: 37px;
    padding: 0 6px;
    border: 1px solid #c6c6c6;
    background: #fff;
    font-size: 13px;
    color: #444;
}
.namebox input {
    flex: 1;
    min-width: 0;
}
.namebox .caret::before {
    border-width: 4px 4px 0;
}
.dots {
    width: 2px;
    height: 10px;
    background: repeating-linear-gradient(#999 0 2px, transparent 2px 4px);
}
.formula .dots {
    margin: 0 14px;
}
.fx {
    display: flex;
    align-items: center;
    gap: 24px;
    flex: 1;
    height: 37px;
    padding-left: 13px;
    border: 1px solid #c6c6c6;
    background: #fff;
}
.sheet {
    flex: none;
    table-layout: fixed;
    width: 995px;
    border-collapse: separate;
    border-spacing: 0;
    background: #fff;
    font-family: "Noto Sans CJK SC", sans-serif;
    font-size: 14px;
    line-height: 16px;
    color: #222;
}
.sheet th {
    width: 69px;
    height: 19px;
    padding: 2px 0 0;
    border-right: 1px solid #ababab;
    border-bottom: 1px solid #ababab;
    background: #e6e6e6;
    font-weight: normal;
}
.sheet .corner, .sheet th:first-child {
    width: 29px;
}
.sheet .corner {
    background: linear-gradient(135deg, #e6e6e6 50%, #b5b5b5 50%) 14px 5px / 12px 12px no-repeat #e6e6e6;
}
.sheet td {
    height: 19px;
    padding: 2px 2px 0;
    border-right: 1px solid #d4d4d4;
    border-bottom: 1px solid #d4d4d4;
    white-space: nowrap;
}
.sheet .num {
    text-align: right;
}
.sheet .cn {
    font-size: 15px;
}
.sheet .spill {
    border-right-color: transparent;
}
.sheet .rest {
    background: repeating-linear-gradient(90deg, transparent 0 68px, #d4d4d4 68px 69px);
}
.sheetbar {
    display: flex;
    align-items: center;
    flex: none;
    height: 28px;
    padding-left: 26px;
    border-top: 1px solid #ababab;
    color: #bbb;
}
.sheetbar .next {
    margin: 0 41px 0 23px;
}
.sheet-tab {
    align-self: flex-start;
    width: 58px;
    height: 25px;
    margin: -1px 33px 0 0;
    border: 1px solid #ababab;
    border-top: 0;
    border-bottom: 2px solid #217346;
    background: #fff;
    color: #217346;
    font-size: 13px;
}
.sheetbar .dots {
    margin: 0 15px 0 369px;
}
.hscroll {
    display: flex;
    flex: 1;
    color: #555;
}
.hscroll button {
    display: flex;
    align-items: center;
    justify-content: center;
    width: 16px;
    height: 15px;
    border: 1px solid #ababab;
    background: #fff;
}
.hscroll .thumb {
    width: 200px;
    border: 1px solid #ababab;
    background: #fff;
}

/* status bar */
.status {
    display: flex;
    align-items: center;
    height: 22px;
    flex: none;
    padding-left: 8px;
    gap: 19px;
    background: #f3f3f3;
    border-top: 1px solid #c6c6c6;
    white-space: nowrap;
}
.display {
    display: flex;
    align-items: center;
    gap: 2px;
}
.excel .display {
    margin-left: 465px;
}
.result .display {
    margin-left: auto;
}
.views {
    display: flex;
    align-self: stretch;
    margin-left: -10px;
}
.views button {
    display: flex;
    align-items: center;
    justify-content: center;
    width: 40px;
}
.views .on {
    border: 0;
}
.zoom {
    display: flex;
    align-items: center;
    gap: 5px;
    width: 190px;
    margin-left: -11px;
    font-size: 13px;
}
.zoom input {
    width: 102px;
    height: 16px;
    appearance: none;
    background: linear-gradient(#999, #999) center / 100% 1px no-repeat;
}
.zoom input::-webkit-slider-thumb {
    appearance: none;
    width: 5px;
    height: 11px;
    background: #555;
}
.zoom .percent {
    margin-left: 9px;
    font-size: 12px;
}

/* document area */
.doc {
    display: flex;
    flex: 1;
    min-height: 0;
}
.gutter {
    flex: none;
    width: 75px;
    background: #e6e6e6;
}
.page {
    display: flex;
    flex: 1;
    padding: 0 42px 0 118px;
    border: solid #c6c6c6;
    border-width: 0 1px;
    background: #fff;
    overflow: hidden;
}
.cell {
    flex: 1;
    height: 400px;
    padding-left: 39px;
    border: solid #000;
    border-width: 0 1px;
    font-family: "Liberation Serif", "Noto Sans CJK SC", serif;
    font-size: 16px;
    font-weight: bold;
    line-height: 36px;
    color: #f00;
    overflow: hidden;
}
.cell p {
    height: 36px;
    white-space: pre;
}
.cell .normal {
    font-weight: normal;
    color: #000;
}
.cell svg {
    display: inline-block;
    vertical-align: 0;
}
.doc1 .cell p:first-child {
    margin-top: -12px;
}
.cell-end {
    margin: 0 -12px 0 2px;
}
.vscroll {
    display: flex;
    flex-direction: column;
    align-items: center;
    width: 16px;
    padding: 2px 1px;
    background: #dadada;
    color: #666;
}
.vscroll button, .vscroll .thumb {
    display: flex;
    align-items: center;
    justify-content: center;
    width: 15px;
    height: 15px;
    border: 1px solid #ababab;
    background: #fff;
}
.vscroll .thumb {
    height: 17px;
    margin: 113px 0 auto;
}

/* red marks and notes */
.marks {
    position: absolute;
    left: 0;
    top: 0;
    pointer-events: none;
}
.note {
    position: absolute;
    font-family: "Noto Sans", "Noto Sans CJK SC", sans-serif;
    font-size: 27px;
    line-height: 36px;
    color: #ed1c24;
    white-space: nowrap;
}
.note-input {
    left: 39px;
    top: 389px;
}
.note-template {
    left: 410px;
    top: 564px;
}
.note-result {
    left: 979px;
    top: 425px;
}
.watermark {
    position: absolute;
    right: 13px;
    top: 708px;
    font-family: "Noto Sans CJK SC", sans-serif;
    font-size: 19px;
    line-height: 26px;
    color: rgba(120, 120, 120, 0.8);
    text-shadow: 1px 1px 0 rgba(255, 255, 255, 0.5);
}
```
